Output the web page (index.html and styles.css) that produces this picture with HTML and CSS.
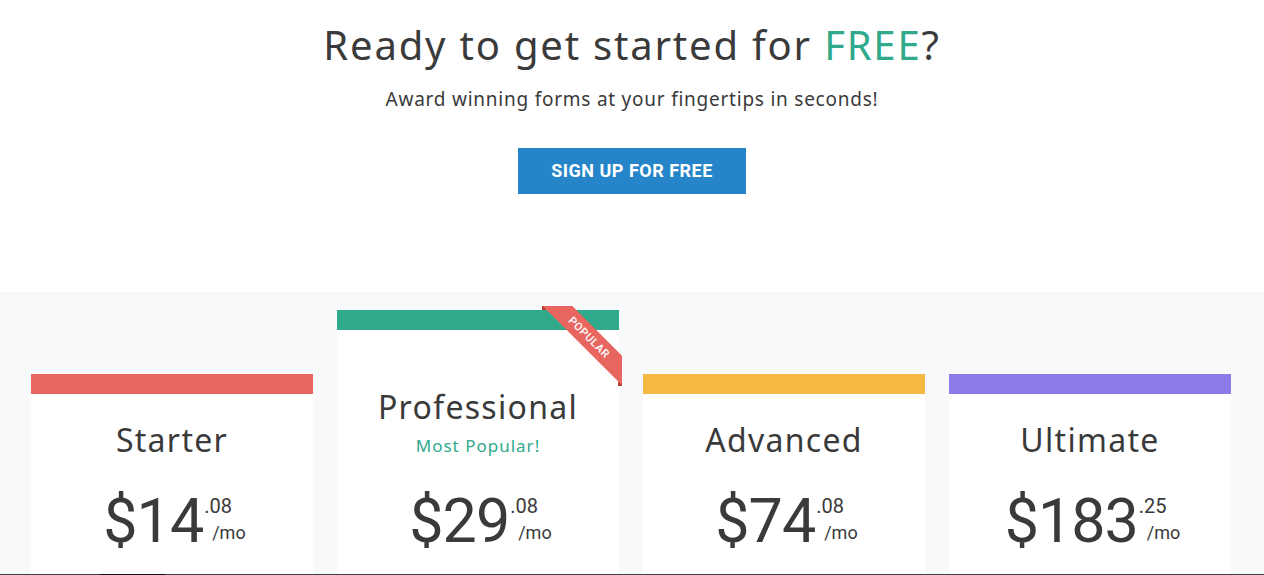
FILE: index.html
```html
<!DOCTYPE html>
<html lang="en">
<head>
<meta charset="utf-8">
<title>Pricing</title>
<link rel="stylesheet" href="styles.css">
</head>
<body>
<section class="hero">
  <h1 class="hero-title">Ready to get started for <span class="accent">FREE</span>?</h1>
  <p class="hero-sub">Award winning forms at your fingertips in seconds!</p>
  <a class="btn" href="#">SIGN UP FOR FREE</a>
</section>
<section class="plans">
  <div class="plan plan-starter">
    <div class="plan-bar"></div>
    <div class="plan-body">
      <h2 class="plan-name">Starter</h2>
      <div class="price"><span class="price-main">$14</span><span class="price-side"><span class="cents">.08</span><span class="per">/mo</span></span></div>
    </div>
  </div>
  <div class="plan plan-pro">
    <div class="plan-bar"></div>
    <div class="ribbon"><span>POPULAR</span></div>
    <div class="plan-body">
      <h2 class="plan-name">Professional</h2>
      <p class="plan-tag">Most Popular!</p>
      <div class="price"><span class="price-main">$29</span><span class="price-side"><span class="cents">.08</span><span class="per">/mo</span></span></div>
    </div>
  </div>
  <div class="plan plan-adv">
    <div class="plan-bar"></div>
    <div class="plan-body">
      <h2 class="plan-name">Advanced</h2>
      <div class="price"><span class="price-main">$74</span><span class="price-side"><span class="cents">.08</span><span class="per">/mo</span></span></div>
    </div>
  </div>
  <div class="plan plan-ult">
    <div class="plan-bar"></div>
    <div class="plan-body">
      <h2 class="plan-name">Ultimate</h2>
      <div class="price"><span class="price-main">$183</span><span class="price-side"><span class="cents">.25</span><span class="per">/mo</span></span></div>
    </div>
  </div>
</section>
<div class="edge"><span class="edge-mark"></span></div>
</body>
</html>
```
FILE: styles.css
```css
* { box-sizing: border-box; }
html, body { margin: 0; padding: 0; }
body {
  background: #ffffff;
  color: #3a3a3a;
  font-family: "Noto Sans", "Open Sans", sans-serif;
  overflow: hidden;
  height: 575px;
}
.hero {
  height: 292px;
  padding-top: 18px;
  text-align: center;
}
.hero-title {
  margin: 0;
  font-weight: 400;
  font-size: 40px;
  line-height: 54px;
  letter-spacing: 1.8px;
  color: #3a3a3a;
}
.accent { color: #31a98b; }
.hero-sub {
  margin: 14px 0 0;
  font-size: 19px;
  line-height: 26px;
  letter-spacing: 0.76px;
  color: #3a3a3a;
}
.btn {
  display: block;
  margin: 36px auto 0;
  width: 228px;
  height: 46px;
  line-height: 46px;
  background: #2585c8;
  color: #ffffff;
  text-decoration: none;
  text-align: center;
  font-family: Roboto, "Liberation Sans", sans-serif;
  font-weight: 700;
  font-size: 18px;
  letter-spacing: 0.5px;
}
.plans {
  height: 282px;
  background: #f8f9fb;
  display: flex;
  align-items: flex-start;
  gap: 24px;
  padding: 0 33px 0 31px;
  overflow: hidden;
}
.plan {
  position: relative;
  width: 282px;
  flex: 0 0 282px;
  margin-top: 82px;
}
.plan-pro { margin-top: 18px; }
.plan-bar { height: 20px; }
.plan-starter .plan-bar { background: #e8665f; }
.plan-pro .plan-bar { background: #31a98b; }
.plan-adv .plan-bar { background: #f5b941; }
.plan-ult .plan-bar { background: #8b7ae8; }
.plan-body {
  background: #ffffff;
  height: 400px;
  text-align: center;
  padding-top: 24px;
}
.plan-pro .plan-body { padding-top: 55px; }
.plan-name {
  margin: 0;
  font-weight: 400;
  font-size: 32px;
  line-height: 44px;
  letter-spacing: 1.3px;
  color: #3a3a3a;
}
.plan-tag {
  margin: 0;
  font-size: 17px;
  line-height: 33px;
  letter-spacing: 1px;
  color: #31a98b;
}
.price {
  margin-top: 24px;
  padding-left: 5px;
  display: flex;
  justify-content: center;
  align-items: flex-start;
  font-family: Roboto, "Liberation Sans", sans-serif;
  color: #3a3a3a;
}
.price-main {
  font-size: 61px;
  line-height: 70px;
  letter-spacing: -1px;
}
.price-side {
  display: flex;
  flex-direction: column;
  align-items: flex-start;
  text-align: left;
  padding-top: 9px;
  margin-left: 1px;
}
.cents { font-size: 20px; line-height: 22px; }
.per { font-size: 18px; line-height: 22px; padding-left: 8px; margin-top: 5px; }
.ribbon {
  position: absolute;
  top: -4px;
  right: -3px;
  width: 80px;
  height: 80px;
  overflow: hidden;
  z-index: 1;
}
.ribbon::before, .ribbon::after {
  content: "";
  position: absolute;
  width: 4px;
  height: 4px;
  background: #b83b35;
}
.ribbon::before { top: 0; left: 0; }
.ribbon::after { bottom: 0; right: 0; }
.ribbon span {
  position: absolute;
  z-index: 1;
  left: -18px;
  top: 21px;
  width: 130px;
  height: 21px;
  line-height: 21px;
  background: #e8665f;
  color: #ffffff;
  text-align: center;
  font-family: Roboto, "Liberation Sans", sans-serif;
  font-size: 11px;
  font-weight: 500;
  letter-spacing: 0.6px;
  transform: rotate(45deg);
}
.edge {
  height: 1px;
  background: #3a4045;
}
.edge-mark {
  display: block;
  margin-left: 100px;
  width: 65px;
  height: 1px;
  background: #111111;
}
```
